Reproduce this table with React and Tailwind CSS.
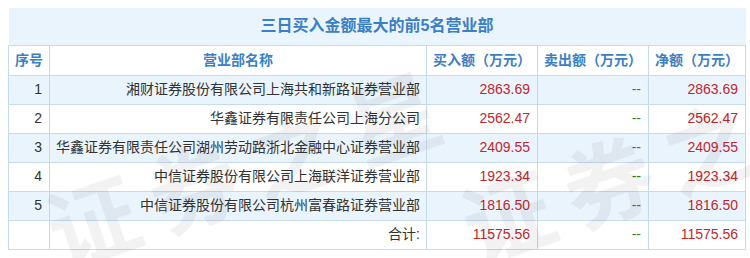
import React from "react";

const rows = [
  { no: 1, name: "湘财证券股份有限公司上海共和新路证券营业部", buy: "2863.69", sell: "--", net: "2863.69" },
  { no: 2, name: "华鑫证券有限责任公司上海分公司", buy: "2562.47", sell: "--", net: "2562.47" },
  { no: 3, name: "华鑫证券有限责任公司湖州劳动路浙北金融中心证券营业部", buy: "2409.55", sell: "--", net: "2409.55" },
  { no: 4, name: "中信证券股份有限公司上海联洋证券营业部", buy: "1923.34", sell: "--", net: "1923.34" },
  { no: 5, name: "中信证券股份有限公司杭州富春路证券营业部", buy: "1816.50", sell: "--", net: "1816.50" },
];

const font = { fontFamily: '"Liberation Sans", "Noto Sans CJK SC", sans-serif' };

export default function App() {
  return (
    <div className="relative w-[750px] h-[258px] bg-white overflow-hidden p-2" style={font}>
      <table className="w-[737px] table-fixed border-collapse text-[14px] text-[#333]">
        <colgroup>
          <col className="w-[41px]" />
          <col className="w-[377px]" />
          <col className="w-[111px]" />
          <col className="w-[111px]" />
          <col className="w-[97px]" />
        </colgroup>
        <thead>
          <tr>
            <th
              colSpan="5"
              className="h-[37px] bg-[#eaf4fd] text-[16px] font-bold text-[#3b7fc4] border-b border-[#c6dbe9]"
            >
              三日买入金额最大的前5名营业部
            </th>
          </tr>
          <tr className="h-[30px] text-[#3b7fc4] font-bold">
            <th className="border border-[#c6dbe9]">序号</th>
            <th className="border border-[#c6dbe9]">营业部名称</th>
            <th className="border border-[#c6dbe9]">买入额（万元）</th>
            <th className="border border-[#c6dbe9]">卖出额（万元）</th>
            <th className="border border-[#c6dbe9]">净额（万元）</th>
          </tr>
        </thead>
        <tbody>
          {rows.map((r, i) => (
            <tr key={r.no} className={`h-[29px] ${i % 2 === 0 ? "bg-[#eaf4fd]" : "bg-white"}`}>
              <td className="border border-[#c6dbe9] text-right pr-[7px]">{r.no}</td>
              <td className="border border-[#c6dbe9] text-right pr-[6px] whitespace-nowrap">{r.name}</td>
              <td className="border border-[#c6dbe9] text-right pr-[7px] text-[#c1272d]">{r.buy}</td>
              <td className="border border-[#c6dbe9] text-right pr-[7px] text-[#2a8a2a]">{r.sell}</td>
              <td className="border border-[#c6dbe9] text-right pr-[7px] text-[#c1272d]">{r.net}</td>
            </tr>
          ))}
          <tr className="h-[29px] bg-white">
            <td className="border border-[#c6dbe9]"></td>
            <td className="border border-[#c6dbe9] text-right pr-[6px]">合计:</td>
            <td className="border border-[#c6dbe9] text-right pr-[7px] text-[#c1272d]">11575.56</td>
            <td className="border border-[#c6dbe9] text-right pr-[7px] text-[#2a8a2a]">--</td>
            <td className="border border-[#c6dbe9] text-right pr-[7px] text-[#c1272d]">11575.56</td>
          </tr>
        </tbody>
      </table>

      {/* watermark, repeated */}
      <div
        className="pointer-events-none absolute left-[52px] top-[195px] origin-left -rotate-[19deg] whitespace-nowrap text-[90px] leading-none font-bold text-black/[0.05] tracking-[16px]"
        style={font}
      >
        证券之星
      </div>
      <div
        className="pointer-events-none absolute left-[467px] top-[190px] origin-left -rotate-[19deg] whitespace-nowrap text-[90px] leading-none font-bold text-black/[0.05] tracking-[16px]"
        style={font}
      >
        证券之星
      </div>
    </div>
  );
}
